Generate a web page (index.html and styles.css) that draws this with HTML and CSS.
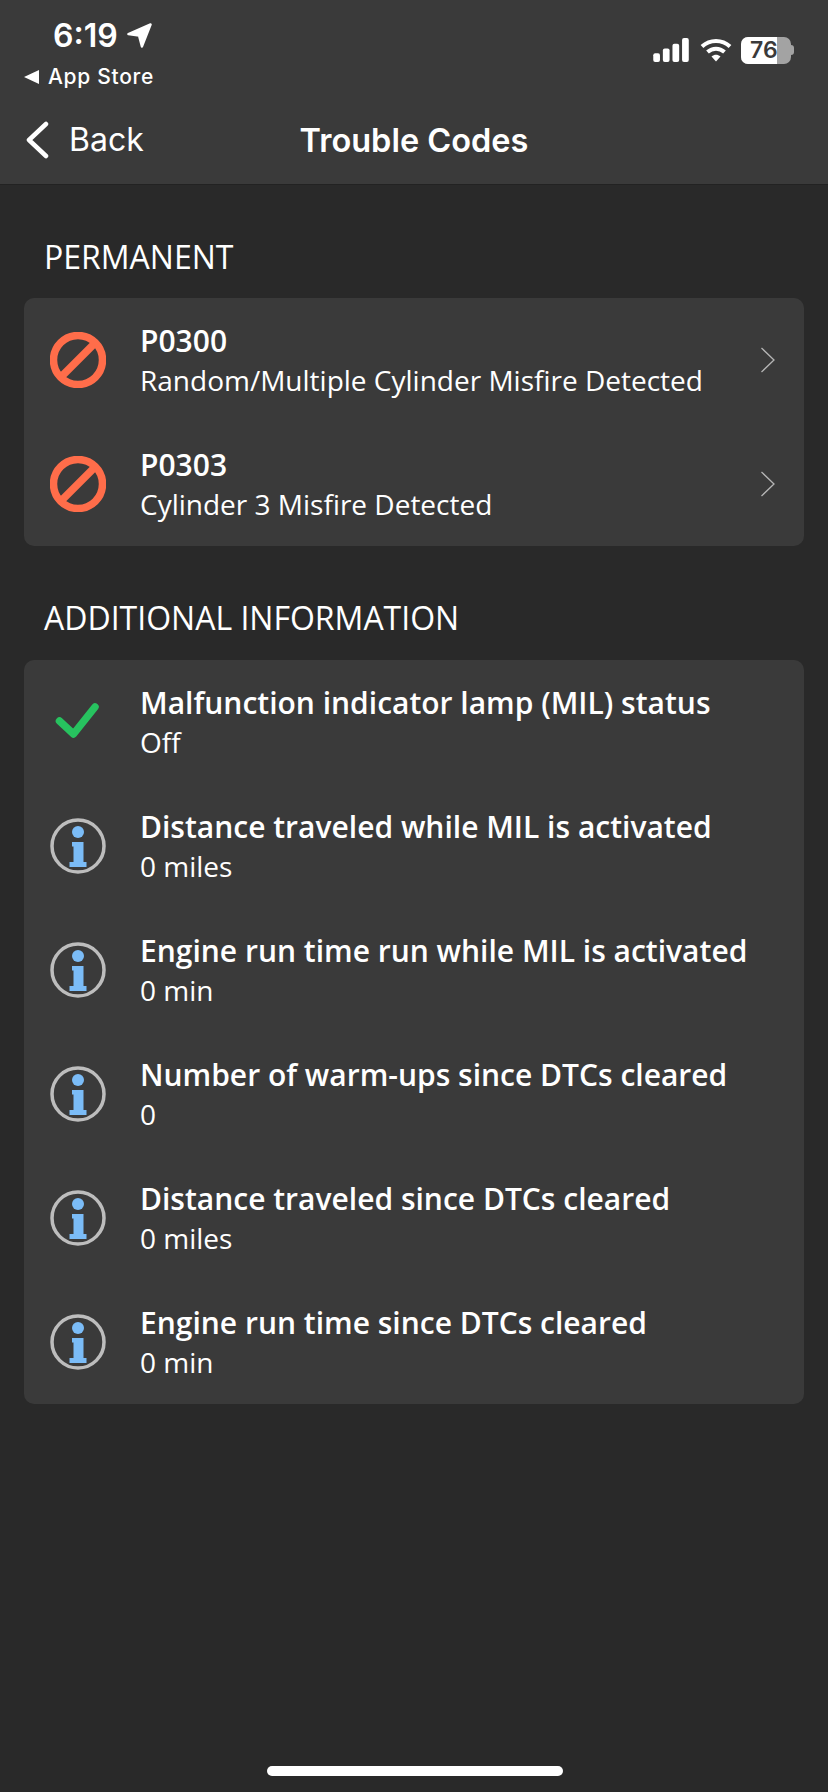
FILE: index.html
```html
<!DOCTYPE html>
<html lang="en">
<head>
    <meta charset="utf-8">
    <title>Trouble Codes</title>
    <link rel="stylesheet" href="styles.css">
</head>
<body>
<svg class="defs" width="0" height="0">
    <symbol id="icon-block" viewBox="0 0 56 56">
        <circle cx="28" cy="28" r="24.500" fill="none" stroke="#ff6d4a" stroke-width="7.500"/>
        <path d="M12 44 44 12" stroke="#ff6d4a" stroke-width="7.500" fill="none"/>
    </symbol>
    <symbol id="icon-info" viewBox="0 0 56 56">
        <circle cx="28" cy="28" r="26" fill="none" stroke="#bdbdbd" stroke-width="3.500"/>
        <circle cx="28" cy="14" r="6" fill="#7bbcf7"/>
        <path d="M22 24h11.500v20h3v5h-17v-5h4v-15.500h-1.500z" fill="#7bbcf7"/>
    </symbol>
    <symbol id="icon-check" viewBox="0 0 56 56">
        <path d="M9.500 27 23.500 40 45 13" fill="none" stroke="#27c25f" stroke-width="7.500" stroke-linecap="round" stroke-linejoin="round"/>
    </symbol>
    <symbol id="icon-chevron" viewBox="0 0 16 26">
        <path d="M1.500 1 14 13 1.500 25" fill="none" stroke="#b5b5b5" stroke-width="1.300"/>
    </symbol>
</svg>

<header class="topbar">
    <div class="status">
        <div class="status-left">
            <div class="clock">6:19
                <svg class="location" viewBox="0 0 26 26"><path d="M1.500 11.500 24.500 1.500 15.500 24.500 12.500 13z" fill="#fff" stroke="#fff" stroke-width="2.500" stroke-linejoin="round"/></svg>
            </div>
            <div class="breadcrumb"><span class="tri"></span>App Store</div>
        </div>
        <div class="status-right">
            <svg class="signal" viewBox="0 0 38 25"><rect x="0" y="16" width="7" height="9" rx="2" fill="#fff"/><rect x="10" y="11" width="7" height="14" rx="2" fill="#fff"/><rect x="20" y="6" width="7" height="19" rx="2" fill="#fff"/><rect x="30" y="0" width="7" height="25" rx="2" fill="#fff"/></svg>
            <svg class="wifi" viewBox="0 0 32 24"><path d="M2 8.500C10 1 22 1 30 8.500" fill="none" stroke="#fff" stroke-width="4"/><path d="M7.500 14C12.500 9.500 19.500 9.500 24.500 14" fill="none" stroke="#fff" stroke-width="4"/><path d="M11.500 18.500 16 23.500 20.500 18.500C17.500 16 14.500 16 11.500 18.500z" fill="#fff"/></svg>
            <div class="battery"><div class="battery-body"><span class="battery-fill"></span><span class="battery-num">76</span></div><span class="battery-cap"></span></div>
        </div>
    </div>
    <nav class="navbar">
        <a class="back" href="#">
            <svg class="back-icon" viewBox="0 0 24 38"><path d="M21 3 4 19 21 35" fill="none" stroke="#fff" stroke-width="4.500" stroke-linecap="round" stroke-linejoin="round"/></svg>
            Back
        </a>
        <h1 class="title">Trouble Codes</h1>
    </nav>
</header>

<main class="content">
    <h2 class="section-title">PERMANENT</h2>
    <section class="card">
        <div class="row">
            <svg class="row-icon"><use href="#icon-block"/></svg>
            <div class="row-text"><div class="row-name">P0300</div><div class="row-value">Random/Multiple Cylinder Misfire Detected</div></div>
            <svg class="chevron"><use href="#icon-chevron"/></svg>
        </div>
        <div class="row">
            <svg class="row-icon"><use href="#icon-block"/></svg>
            <div class="row-text"><div class="row-name">P0303</div><div class="row-value">Cylinder 3 Misfire Detected</div></div>
            <svg class="chevron"><use href="#icon-chevron"/></svg>
        </div>
    </section>

    <h2 class="section-title">ADDITIONAL INFORMATION</h2>
    <section class="card">
        <div class="row">
            <svg class="row-icon"><use href="#icon-check"/></svg>
            <div class="row-text"><div class="row-name">Malfunction indicator lamp (MIL) status</div><div class="row-value">Off</div></div>
        </div>
        <div class="row">
            <svg class="row-icon"><use href="#icon-info"/></svg>
            <div class="row-text"><div class="row-name">Distance traveled while MIL is activated</div><div class="row-value">0 miles</div></div>
        </div>
        <div class="row">
            <svg class="row-icon"><use href="#icon-info"/></svg>
            <div class="row-text"><div class="row-name">Engine run time run while MIL is activated</div><div class="row-value">0 min</div></div>
        </div>
        <div class="row">
            <svg class="row-icon"><use href="#icon-info"/></svg>
            <div class="row-text"><div class="row-name">Number of warm-ups since DTCs cleared</div><div class="row-value">0</div></div>
        </div>
        <div class="row">
            <svg class="row-icon"><use href="#icon-info"/></svg>
            <div class="row-text"><div class="row-name">Distance traveled since DTCs cleared</div><div class="row-value">0 miles</div></div>
        </div>
        <div class="row">
            <svg class="row-icon"><use href="#icon-info"/></svg>
            <div class="row-text"><div class="row-name">Engine run time since DTCs cleared</div><div class="row-value">0 min</div></div>
        </div>
    </section>
</main>

<div class="home-indicator"></div>
</body>
</html>
```

FILE: styles.css
```css
* {
    box-sizing: border-box;
}

html, body {
    margin: 0;
    height: 100%;
}

body {
    position: relative;
    height: 1792px;
    overflow: hidden;
    background: #292929;
    color: #fff;
    font-family: "Open Sans", "Noto Sans", sans-serif;
}

.defs {
    position: absolute;
}

.topbar {
    height: 185px;
    background: #3a3a3a;
    border-bottom: 1px solid #222;
    font-family: Inter, sans-serif;
}

.status {
    display: flex;
    justify-content: space-between;
    height: 96px;
    padding: 16px 34px 0 24px;
}

.clock {
    display: flex;
    align-items: center;
    gap: 9px;
    height: 38px;
    padding-left: 29px;
    font-size: 32px;
    font-weight: 600;
}

.location {
    width: 25px;
    height: 25px;
}

.breadcrumb {
    display: flex;
    align-items: center;
    gap: 9px;
    margin-top: 10px;
    font-size: 21px;
    font-weight: 500;
    letter-spacing: 0.7px;
}

.tri {
    width: 0;
    height: 0;
    border-top: 7px solid transparent;
    border-bottom: 7px solid transparent;
    border-right: 15px solid #fff;
}

.status-right {
    display: flex;
    align-items: center;
    gap: 10px;
    height: 68px;
}

.signal {
    width: 37px;
    height: 24px;
}

.wifi {
    width: 32px;
    height: 24px;
    margin-right: -1px;
}

.battery {
    display: flex;
    align-items: center;
}

.battery-body {
    position: relative;
    width: 50px;
    height: 27px;
    border-radius: 7px;
    overflow: hidden;
    background: #a3a3a3;
}

.battery-fill {
    position: absolute;
    left: 0;
    top: 0;
    bottom: 0;
    width: 36px;
    background: #fff;
}

.battery-num {
    position: absolute;
    left: 9px;
    top: 0;
    line-height: 27px;
    font-size: 23px;
    font-weight: 600;
    color: #3a3a3a;
}

.battery-cap {
    width: 3px;
    height: 10px;
    border-radius: 0 4px 4px 0;
    background: #a3a3a3;
}

.navbar {
    position: relative;
    display: flex;
    align-items: center;
    justify-content: center;
    height: 88px;
}

.back {
    position: absolute;
    left: 25px;
    top: 24px;
    display: flex;
    align-items: center;
    gap: 20px;
    color: #fff;
    font-size: 32px;
    line-height: 40px;
    text-decoration: none;
}

.back-icon {
    width: 24px;
    height: 38px;
}

.title {
    margin: 0;
    font-size: 32.500px;
    font-weight: 600;
}

.content {
    padding: 0 24px;
}

.section-title {
    margin: 0;
    padding: 52px 20px 21px;
    font-size: 32px;
    line-height: 40px;
    font-weight: 400;
}

.section-title + .card + .section-title {
    padding-bottom: 22px;
}

.card {
    background: #3a3a3a;
    border-radius: 10px;
}

.row {
    display: flex;
    align-items: center;
    height: 124px;
    padding: 0 28px 0 26px;
}

.row-icon {
    flex: none;
    width: 56px;
    height: 56px;
}

.row-text {
    flex: 1;
    padding-left: 34px;
    padding-top: 1px;
}

.row-name {
    font-size: 30px;
    line-height: 40px;
    font-weight: 600;
}

.row-value {
    margin-top: -1px;
    font-size: 28px;
    line-height: 40px;
    font-weight: 400;
}

.chevron {
    flex: none;
    width: 16px;
    height: 26px;
}

.home-indicator {
    position: absolute;
    left: 267px;
    bottom: 16px;
    width: 296px;
    height: 10px;
    border-radius: 5px;
    background: #fff;
}
```
